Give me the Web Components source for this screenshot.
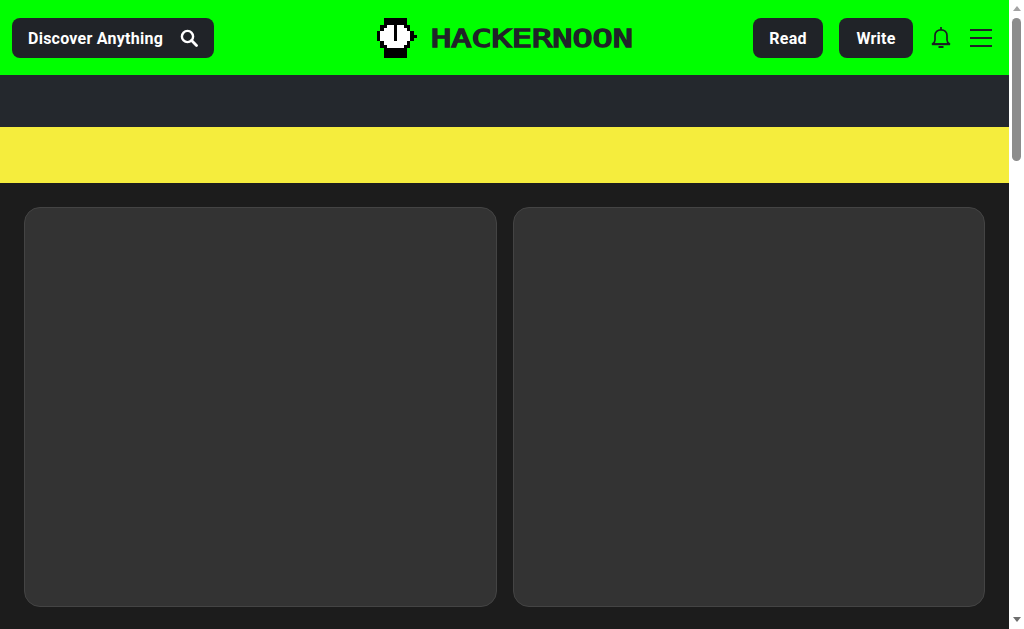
<!DOCTYPE html>
<html lang="en">
<head>
<meta charset="utf-8">
<title>HackerNoon</title>
<style>
  html, body { height: 100%; }
  body { margin: 0; display: flex; overflow: hidden; background: #1c1c1c; font-family: Roboto, "Liberation Sans", sans-serif; }
  main { flex: 1; min-width: 0; height: 100%; overflow: hidden; }
</style>
</head>
<body>
<main>
  <hn-header></hn-header>
  <hn-band color="#24282d" height="52"></hn-band>
  <hn-band color="#f5ed3d" height="56"></hn-band>
  <hn-grid>
    <hn-card></hn-card>
    <hn-card></hn-card>
  </hn-grid>
</main>
<hn-scrollbar></hn-scrollbar>

<script>
// pixel clock, one string per row: k = black, w = white, . = empty
const CLOCK = [
  '..kkkkkkk...',
  '..kkkkkkk...',
  '.kkwwkwwkk..',
  '.kwwwkwwwk..',
  'kwwwwkwwwwk.',
  'kwwwwkwwwwkk',
  'kwwwwkwwwwk.',
  '.kwwwwwwwk..',
  '.kkwwwwwkk..',
  '..kkkkkkk...',
  '..kkkkkkk...',
  '..kkkkkkk...'
];

function clockRects() {
  let out = '';
  CLOCK.forEach((row, y) => {
    [...row].forEach((c, x) => {
      if (c === '.') return;
      out += `<rect x="${x}" y="${y}" width="1.02" height="1.02" fill="${c === 'k' ? '#000' : '#fff'}"/>`;
    });
  });
  return out;
}

class HnButton extends HTMLElement {
  constructor() {
    super();
    this.attachShadow({ mode: 'open' });
    this.shadowRoot.innerHTML = `
      <style>
        :host {
          display: inline-flex;
          align-items: center;
          justify-content: center;
          gap: 17px;
          height: 40px;
          padding: 1px 16px 0;
          box-sizing: border-box;
          background: #202328;
          border-radius: 8px;
          color: #fff;
          font: 700 16px Roboto, "Liberation Sans", sans-serif;
          letter-spacing: 0.25px;
          white-space: nowrap;
        }
      </style>
      <slot></slot>
    `;
  }
}

class HnLogo extends HTMLElement {
  constructor() {
    super();
    this.attachShadow({ mode: 'open' });
    this.shadowRoot.innerHTML = `
      <style>
        :host { display: flex; align-items: center; gap: 14px; width: 256px; }
        svg { display: block; flex: none; }
        .wordmark { margin: 0 -4px; }
        .word {
          font: 400 25px "DejaVu Sans Mono", monospace;
          fill: #202328;
          stroke: #202328;
          stroke-width: 1.4;
          stroke-linejoin: miter;
        }
      </style>
      <svg width="40" height="40" viewBox="0 0 12 12" shape-rendering="crispEdges" aria-hidden="true">${clockRects()}</svg>
      <svg class="wordmark" width="210" height="32" viewBox="0 0 210 32">
        <text class="word" x="4" y="25" textLength="202" lengthAdjust="spacingAndGlyphs">HACKERNOON</text>
      </svg>
    `;
  }
}

class HnHeader extends HTMLElement {
  constructor() {
    super();
    this.attachShadow({ mode: 'open' });
    this.shadowRoot.innerHTML = `
      <style>
        :host {
          display: grid;
          grid-template-columns: 1fr auto 1fr;
          align-items: center;
          height: 75px;
          padding: 0 12px;
          box-sizing: border-box;
          background: #00ff00;
        }
        .left { display: flex; }
        .right { display: flex; align-items: center; justify-content: flex-end; margin-right: 5px; }
        .read { width: 70px; padding: 1px 0 0; }
        .write { width: 74px; padding: 1px 0 0; margin-left: 16px; }
        .bell { margin-left: 18px; }
        .menu { margin-left: 19px; }
        svg { display: block; }
      </style>
      <div class="left">
        <hn-button>
          Discover Anything
          <svg width="18" height="18" viewBox="0 0 18 18" fill="none" stroke="#fff" aria-hidden="true">
            <circle cx="7.5" cy="7.5" r="5.6" stroke-width="2.4"/>
            <path d="M11.6 11.6L16.5 16.5" stroke-width="2.8" stroke-linecap="round"/>
          </svg>
        </hn-button>
      </div>
      <hn-logo></hn-logo>
      <div class="right">
        <hn-button class="read">Read</hn-button>
        <hn-button class="write">Write</hn-button>
        <svg class="bell" width="20" height="24" viewBox="0 0 20 24" fill="none" stroke="#1a1d22" stroke-width="1.7" aria-hidden="true">
          <path d="M10 1V4"/>
          <path d="M4 14V9.5C4 6 6.5 3.8 10 3.8S16 6 16 9.5V14C16 15.5 17 17 18.5 18H1.5C3 17 4 15.5 4 14Z" stroke-linejoin="round"/>
          <path d="M1 18.2H19" stroke-width="2"/>
          <path d="M7.5 21H12.5" stroke-width="2"/>
        </svg>
        <svg class="menu" width="22" height="18" viewBox="0 0 22 18" stroke="#202328" stroke-width="2" aria-hidden="true">
          <path d="M0 1H22M0 9H22M0 17H22"/>
        </svg>
      </div>
    `;
  }
}

class HnBand extends HTMLElement {
  constructor() {
    super();
    this.attachShadow({ mode: 'open' });
    this.shadowRoot.innerHTML = `<style>:host { display: block; }</style>`;
  }
  connectedCallback() {
    this.style.background = this.getAttribute('color');
    this.style.height = this.getAttribute('height') + 'px';
  }
}

class HnGrid extends HTMLElement {
  constructor() {
    super();
    this.attachShadow({ mode: 'open' });
    this.shadowRoot.innerHTML = `
      <style>
        :host {
          display: grid;
          grid-template-columns: 1fr 1fr;
          gap: 16px;
          padding: 24px;
          background: #1c1c1c;
        }
      </style>
      <slot></slot>
    `;
  }
}

class HnCard extends HTMLElement {
  constructor() {
    super();
    this.attachShadow({ mode: 'open' });
    this.shadowRoot.innerHTML = `
      <style>
        :host {
          display: block;
          height: 400px;
          box-sizing: border-box;
          background: #333333;
          border: 1px solid #444444;
          border-radius: 16px;
        }
      </style>
    `;
  }
}

// headless chrome hides the native bar, so it is drawn
class HnScrollbar extends HTMLElement {
  constructor() {
    super();
    this.attachShadow({ mode: 'open' });
    this.shadowRoot.innerHTML = `
      <style>
        :host {
          flex: none;
          display: flex;
          flex-direction: column;
          align-items: center;
          width: 15px;
          height: 100%;
          background: #fff;
        }
        .up { margin-top: 6px; border: solid transparent; border-width: 0 4.5px 5px; border-bottom-color: #a3a3a3; }
        .thumb { margin-top: 7px; width: 9px; height: 143px; border-radius: 4.5px; background: #8c8c8c; }
        .down { margin-top: auto; margin-bottom: 7px; border: solid transparent; border-width: 5px 4.5px 0; border-top-color: #6e6e6e; }
      </style>
      <div class="up"></div>
      <div class="thumb"></div>
      <div class="down"></div>
    `;
  }
}

customElements.define('hn-button', HnButton);
customElements.define('hn-logo', HnLogo);
customElements.define('hn-header', HnHeader);
customElements.define('hn-band', HnBand);
customElements.define('hn-grid', HnGrid);
customElements.define('hn-card', HnCard);
customElements.define('hn-scrollbar', HnScrollbar);
</script>
</body>
</html>
